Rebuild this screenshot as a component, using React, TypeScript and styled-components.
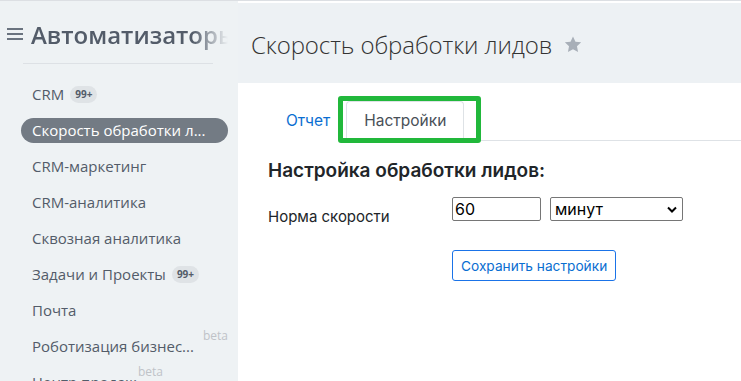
import React from "react";
import styled, { createGlobalStyle } from "styled-components";

const Global = createGlobalStyle`
  html, body { margin: 0; padding: 0; background: #fff; }
  body { width: 741px; height: 381px; overflow: hidden; }
`;

const Page = styled.div`
  display: flex;
  width: 741px;
  height: 381px;
  overflow: hidden;
  border-top: 1px solid #dcdfe3;
  box-sizing: border-box;
`;

const Sidebar = styled.aside`
  width: 238px;
  flex: none;
  background: #eef2f4;
  display: flex;
  flex-direction: column;
  overflow: hidden;
  font-family: "Open Sans", "Noto Sans", sans-serif;
`;

const SideHead = styled.div`
  flex: none;
  display: flex;
  align-items: center;
  gap: 8px;
  height: 62px;
  padding: 4px 10px 0 7px;
  box-sizing: border-box;
`;

const Burger = styled.div`
  width: 16px;
  height: 12px;
  flex: none;
  display: flex;
  flex-direction: column;
  justify-content: space-between;
  & > span { display: block; height: 2px; background: #6a737f; }
`;

const SideTitle = styled.div`
  font-size: 24px;
  font-weight: 600;
  color: #535c69;
  white-space: nowrap;
  overflow: hidden;
  width: 197px;
  -webkit-mask-image: linear-gradient(to right, #000 82%, transparent 100%);
  mask-image: linear-gradient(to right, #000 82%, transparent 100%);
`;

const Divider = styled.div`
  flex: none;
  height: 1px;
  background: #dde1e5;
  margin: 0 25px 0 23px;
`;

const Menu = styled.ul`
  flex: none;
  list-style: none;
  margin: 12px 0 0;
  padding: 0 10px 0 21px;
`;

const Item = styled.li<{ $active?: boolean }>`
  height: 36px;
  display: flex;
  align-items: center;
  font-size: 15px;
  color: #535c69;
  position: relative;
  & > .label {
    display: flex;
    align-items: center;
    height: 25px;
    padding: 0 11px;
    border-radius: 13px;
    box-sizing: border-box;
    width: ${(p) => (p.$active ? "100%" : "auto")};
    background: ${(p) => (p.$active ? "#737b84" : "transparent")};
    color: ${(p) => (p.$active ? "#fff" : "#535c69")};
    white-space: nowrap;
    overflow: hidden;
  }
`;

const Counter = styled.span`
  display: inline-flex;
  align-items: center;
  justify-content: center;
  margin-left: 6px;
  height: 17px;
  padding: 0 5px;
  border-radius: 9px;
  background: #dfe3e6;
  color: #535c69;
  font-size: 10px;
  font-weight: 700;
`;

const Beta = styled.span<{ $left: number }>`
  position: absolute;
  top: -1px;
  left: ${(p) => p.$left}px;
  font-size: 12px;
  color: #bfc3c8;
`;

const Main = styled.main`
  flex: 1;
  display: flex;
  flex-direction: column;
  min-width: 0;
`;

const Header = styled.header`
  flex: none;
  margin-top: 2px;
  height: 80px;
  background: #edf1f4;
  display: flex;
  align-items: center;
  gap: 11px;
  padding: 2px 0 0 13px;
  box-sizing: border-box;
`;

const PageTitle = styled.h1`
  margin: 0;
  font-family: "Open Sans", "Noto Sans", sans-serif;
  font-weight: 300;
  font-size: 24px;
  color: #333;
  letter-spacing: -0.1px;
`;

const Body = styled.div`
  padding: 18px 0 0 30px;
  font-family: Inter, "Noto Sans", sans-serif;
  color: #212529;
`;

const Tabs = styled.nav`
  display: flex;
  border-bottom: 1px solid #dee2e6;
`;

const Tab = styled.div<{ $active?: boolean }>`
  position: relative;
  padding: 8px 17px;
  font-size: 15.5px;
  line-height: 22px;
  border: 1px solid ${(p) => (p.$active ? "#dee2e6" : "transparent")};
  border-bottom-color: ${(p) => (p.$active ? "#fff" : "transparent")};
  margin-bottom: -1px;
  margin-left: ${(p) => (p.$active ? "-2px" : "0")};
  border-radius: 4px 4px 0 0;
  color: ${(p) => (p.$active ? "#495057" : "#0a6ed1")};
  background: #fff;
`;

const Highlight = styled.span`
  position: absolute;
  left: -9px;
  right: -18px;
  top: -6px;
  bottom: -3px;
  border: 5px solid #21b83b;
  border-radius: 3px;
  pointer-events: none;
`;

const Heading = styled.h2`
  margin: 18px 0 0;
  font-size: 19px;
  font-weight: 600;
  color: #212529;
`;

const Form = styled.div`
  display: grid;
  grid-template-columns: 184px auto;
  row-gap: 24px;
  margin-top: 15px;
  align-items: start;
`;

const Label = styled.div`
  font-size: 15px;
  line-height: 18px;
  padding-top: 11px;
`;

const Controls = styled.div`
  display: flex;
  gap: 9px;
`;

const Input = styled.div`
  width: 89px;
  height: 24px;
  box-sizing: border-box;
  border: 1px solid #767676;
  border-radius: 2px;
  font-size: 16px;
  color: #000;
  padding: 0 2px;
  display: flex;
  align-items: center;
`;

const Select = styled(Input)`
  width: 133px;
  justify-content: space-between;
  padding: 0 5px 0 4px;
`;

const Button = styled.div`
  grid-column: 2;
  justify-self: start;
  height: 31px;
  box-sizing: border-box;
  padding: 0 8px;
  border: 1px solid #1a73e8;
  border-radius: 3px;
  color: #0a6ed1;
  font-size: 13.7px;
  display: flex;
  align-items: center;
`;

const items: { label: string; counter?: string; active?: boolean; beta?: number }[] = [
  { label: "CRM", counter: "99+" },
  { label: "Скорость обработки л...", active: true },
  { label: "CRM-маркетинг" },
  { label: "CRM-аналитика" },
  { label: "Сквозная аналитика" },
  { label: "Задачи и Проекты", counter: "99+" },
  { label: "Почта" },
  { label: "Роботизация бизнес...", beta: 182 },
  { label: "Центр продаж", beta: 117 },
];

export default function App() {
  return (
    <>
      <Global />
      <Page>
        <Sidebar>
          <SideHead>
            <Burger>
              <span />
              <span />
              <span />
            </Burger>
            <SideTitle>Автоматизаторы</SideTitle>
          </SideHead>
          <Divider />
          <Menu>
            {items.map((it) => (
              <Item key={it.label} $active={it.active}>
                <span className="label">
                  {it.label}
                  {it.counter && <Counter>{it.counter}</Counter>}
                </span>
                {it.beta !== undefined && <Beta $left={it.beta}>beta</Beta>}
              </Item>
            ))}
          </Menu>
        </Sidebar>
        <Main>
          <Header>
            <PageTitle>Скорость обработки лидов</PageTitle>
            <svg width="20" height="19" viewBox="0 0 24 24">
              <path
                d="M12 1.8l3.1 6.6 7.2.9-5.3 5 1.4 7.1L12 17.9l-6.4 3.5L7 14.3l-5.3-5 7.2-.9z"
                fill="#a8afb8"
              />
            </svg>
          </Header>
          <Body>
            <Tabs>
              <Tab>Отчет</Tab>
              <Tab $active>
                Настройки
                <Highlight />
              </Tab>
            </Tabs>
            <Heading>Настройка обработки лидов:</Heading>
            <Form>
              <Label>Норма скорости</Label>
              <Controls>
                <Input>60</Input>
                <Select>
                  <span>минут</span>
                  <svg width="10" height="7" viewBox="0 0 10 7">
                    <path d="M1 1.5l4 4 4-4" stroke="#000" strokeWidth="2" fill="none" />
                  </svg>
                </Select>
              </Controls>
              <Button>Сохранить настройки</Button>
            </Form>
          </Body>
        </Main>
      </Page>
    </>
  );
}
